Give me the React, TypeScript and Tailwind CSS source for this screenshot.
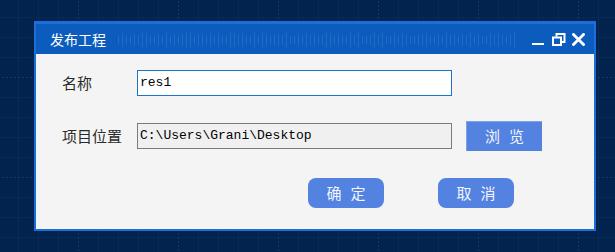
import React from "react";

// ---- background grid (decorative drawing) ----
const GridBackdrop = () => (
  <svg className="absolute inset-0" width="615" height="252" aria-hidden="true">
    <defs>
      <pattern id="grid" x="78" y="77" width="100" height="100" patternUnits="userSpaceOnUse">
        {[20, 40, 60, 80].map((p) => (
          <g key={p}>
            <line x1={p + 0.5} y1="0" x2={p + 0.5} y2="100" stroke="#082a56" strokeWidth="1" />
            <line x1="0" y1={p + 0.5} x2="100" y2={p + 0.5} stroke="#082a56" strokeWidth="1" />
          </g>
        ))}
        <line x1="0.5" y1="0" x2="0.5" y2="100" stroke="#163864" strokeWidth="1" strokeDasharray="2 2" />
        <line x1="0" y1="0.5" x2="100" y2="0.5" stroke="#163864" strokeWidth="1" strokeDasharray="2 2" />
      </pattern>
    </defs>
    <rect width="615" height="252" fill="url(#grid)" />
  </svg>
);

// faint waveform strip behind the title
const TitleWave = () => {
  const lines = Array.from({ length: 100 }, (_, i) => {
    const v = Math.abs(Math.sin(i * 1.7) + Math.sin(i * 0.63) * 0.6);
    const h = v > 1 ? 15 : v > 0.5 ? 11 : 8;
    return { x: i * 4 + 0.5, h };
  });
  return (
    <svg width="402" height="16" className="ml-[12px] mt-[1px]" aria-hidden="true">
      {lines.map((l) => (
        <line
          key={l.x}
          x1={l.x}
          x2={l.x}
          y1={8 - l.h / 2}
          y2={8 + l.h / 2}
          stroke="#4a8ad8"
          strokeOpacity="0.35"
          strokeWidth="1"
        />
      ))}
    </svg>
  );
};

const WindowControls = () => (
  <div className="ml-auto mr-[9px] flex items-center">
    {/* minimise */}
    <svg width="13" height="13" viewBox="0 0 13 13">
      <rect x="0" y="10" width="12" height="2" fill="#fff" />
    </svg>
    {/* restore */}
    <svg width="14" height="13" viewBox="0 0 14 13" className="ml-[7px]">
      <path d="M4.5 3.5V1h8v8h-3" fill="none" stroke="#fff" strokeWidth="2" />
      <rect x="1" y="4.5" width="8" height="7.5" fill="#0b5cbd" stroke="#fff" strokeWidth="2" />
    </svg>
    {/* close */}
    <svg width="13" height="13" viewBox="0 0 13 13" className="ml-[6px]">
      <path d="M1.5 1.5l10 10M11.5 1.5l-10 10" stroke="#fff" strokeWidth="2.8" strokeLinecap="square" />
    </svg>
  </div>
);

const cjk = "font-['Noto_Sans_CJK_SC','Noto_Sans',sans-serif]";
const mono = "font-['Liberation_Mono','Noto_Sans_CJK_SC',monospace]";

const BlueButton = ({ a, b, rounded = false }: { a: string; b: string; rounded?: boolean }) => (
  <button
    className={`w-[76px] h-[30px] bg-[#5382e1] text-[#f2f5ff] text-[15px] flex items-center justify-center gap-[9px] ${cjk} ${
      rounded ? "rounded-lg" : "border-l border-t border-[#7fa2ea]"
    }`}
  >
    <span>{a}</span>
    <span>{b}</span>
  </button>
);

export default function App() {
  return (
    <div className="relative w-[615px] h-[252px] bg-[#03234f] overflow-hidden">
      <GridBackdrop />
      <div className="relative pl-[34px] pt-[21px]">
        <div className="w-[562px] h-[210px] border-2 border-t-[3px] border-[#1a6fdb] bg-[#f4f4f4] flex flex-col">
          {/* title bar */}
          <div className="h-[30px] bg-[#0b5cbd] flex items-center pl-[14px]">
            <span className={`text-white text-[14px] leading-none ${cjk}`}>发布工程</span>
            <TitleWave />
            <WindowControls />
          </div>

          {/* body */}
          <div className="flex-1 pt-[16px] pl-[26px] flex flex-col">
            <div className="flex items-center h-[26px]">
              <span className={`w-[75px] text-[15px] text-[#2a2a2a] ${cjk}`}>名称</span>
              <div className={`w-[315px] h-[26px] border border-[#1b73cb] bg-white pl-[2px] flex items-center text-[13px] text-black ${mono}`}>
                res1
              </div>
            </div>

            <div className="flex items-center h-[30px] mt-[25px]">
              <span className={`w-[75px] text-[15px] text-[#2a2a2a] ${cjk}`}>项目位置</span>
              <div className={`w-[315px] h-[26px] border border-[#7b7b7b] bg-[#f0f0f0] pl-[2px] flex items-center text-[13px] text-black ${mono}`}>
                C:\Users\Grani\Desktop
              </div>
              <div className="ml-[14px]">
                <BlueButton a="浏" b="览" />
              </div>
            </div>

            <div className="flex mt-[27px] ml-[246px] gap-[54px]">
              <BlueButton a="确" b="定" rounded />
              <BlueButton a="取" b="消" rounded />
            </div>
          </div>
        </div>
      </div>
    </div>
  );
}
